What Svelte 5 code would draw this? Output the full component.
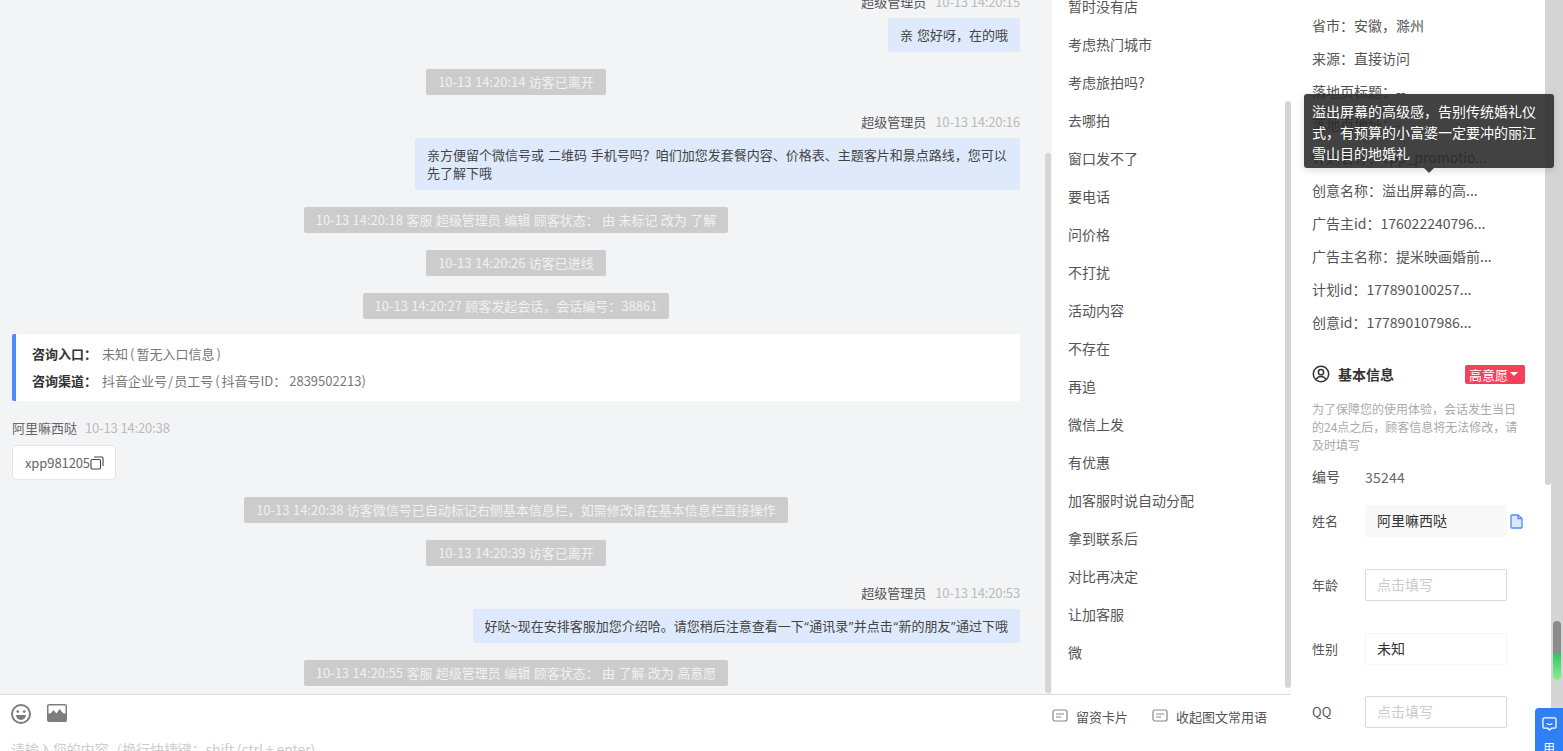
<script>
  const messages = [
    { type: 'head', name: '超级管理员', time: '10-13 14:20:15' },
    { type: 'mine', text: '亲 您好呀，在的哦' },
    { type: 'sys', text: '10-13 14:20:14 访客已离开' },
    { type: 'head', name: '超级管理员', time: '10-13 14:20:16' },
    { type: 'mine', text: '亲方便留个微信号或 二维码 手机号吗？咱们加您发套餐内容、价格表、主题客片和景点路线，您可以先了解下哦' },
    { type: 'sys', text: '10-13 14:20:18 客服 超级管理员 编辑 顾客状态： 由 未标记 改为 了解' },
    { type: 'sys', text: '10-13 14:20:26 访客已进线' },
    { type: 'sys', text: '10-13 14:20:27 顾客发起会话，会话编号：38861' },
    { type: 'entry' },
    { type: 'visitor' },
    { type: 'sys', text: '10-13 14:20:38 访客微信号已自动标记右侧基本信息栏，如需修改请在基本信息栏直接操作' },
    { type: 'sys', text: '10-13 14:20:39 访客已离开' },
    { type: 'head', name: '超级管理员', time: '10-13 14:20:53' },
    { type: 'quoted' },
    { type: 'sys', text: '10-13 14:20:55 客服 超级管理员 编辑 顾客状态： 由 了解 改为 高意愿' }
  ];

  const phrases = ['暂时没有店', '考虑热门城市', '考虑旅拍吗?', '去哪拍', '窗口发不了', '要电话', '问价格', '不打扰', '活动内容', '不存在', '再追', '微信上发', '有优惠', '加客服时说自动分配', '拿到联系后', '对比再决定', '让加客服', '微'];

  const details = ['省市：安徽，滁州', '来源：直接访问', '落地页标题：--', '落地页地址：--', '计划名称：cpp_promotio...', '创意名称：溢出屏幕的高...', '广告主id：176022240796...', '广告主名称：提米映画婚前...', '计划id：177890100257...', '创意id：177890107986...'];
</script>

<div class="app">
  <div class="main">
    <div class="top">
      <div class="chat">
        {#each messages as m}
          {#if m.type === 'head'}
            <div class="head"><span>{m.name}</span><span class="time">{m.time}</span></div>
          {:else if m.type === 'mine'}
            <div class="bubble">{m.text}</div>
          {:else if m.type === 'quoted'}
            <div class="bubble">好哒~现在安排客服加您介绍哈。请您稍后注意查看一下<span class="q">“</span>通讯录<span class="q">”</span>并点击<span class="q">“</span>新的朋友<span class="q">”</span>通过下哦</div>
          {:else if m.type === 'sys'}
            <div class="sys">{m.text}</div>
          {:else if m.type === 'entry'}
            <div class="entry">
              <div><b>咨询入口：</b>未知<span class="w">(</span>暂无入口信息<span class="w">)</span></div>
              <div><b>咨询渠道：</b>抖音企业号<span class="s">/</span>员工号<span class="w">(</span>抖音号ID： 2839502213)</div>
            </div>
          {:else}
            <div class="visitor">
              <div class="visitor-head"><span>阿里嘛西哒</span><span class="time">10-13 14:20:38</span></div>
              <div class="wechat">
                xpp981205
                <svg width="14" height="14" viewBox="0 0 14 14" fill="none" stroke="#444" stroke-width="1.1">
                  <rect x="1" y="3.5" width="9.5" height="9.5" rx="1.2" />
                  <path d="M4 1h7.8A1.2 1.2 0 0 1 13 2.2V10" />
                </svg>
              </div>
            </div>
          {/if}
        {/each}
        <div class="thumb chat-thumb"></div>
      </div>
      <div class="phrases">
        {#each phrases as p}
          <div class="phrase">{p}</div>
        {/each}
        <div class="thumb phrase-thumb"></div>
      </div>
    </div>
    <div class="composer">
      <div class="tools">
        <div class="tools-left">
          <svg width="22" height="22" viewBox="0 0 22 22" fill="none">
            <circle cx="11" cy="11" r="9" stroke="#7d7d7d" stroke-width="2" />
            <circle cx="7.8" cy="8.6" r="1.4" fill="#7d7d7d" />
            <circle cx="14.2" cy="8.6" r="1.4" fill="#7d7d7d" />
            <path d="M6 12h10a5 5 0 0 1-10 0z" fill="#7d7d7d" />
          </svg>
          <svg width="22" height="20" viewBox="0 0 22 20">
            <rect x="1" y="1" width="20" height="18" rx="2" fill="#7d7d7d" />
            <rect x="2.5" y="2.5" width="17" height="8" fill="#fff" />
            <path d="M2.5 13l5-6 3 3.5 3-4.5 6 7v1h-17z" fill="#7d7d7d" />
          </svg>
        </div>
        <div class="tools-right">
          <span class="tool">
            <svg width="16" height="14" viewBox="0 0 16 14" fill="none" stroke="#888" stroke-width="1.2">
              <rect x="1" y="1" width="14" height="11" rx="2" />
              <path d="M4 5h8M4 8h5" />
            </svg>
            留资卡片
          </span>
          <span class="tool">
            <svg width="16" height="14" viewBox="0 0 16 14" fill="none" stroke="#888" stroke-width="1.2">
              <rect x="1" y="1" width="14" height="11" rx="2" />
              <path d="M4 5h8M4 8h5" />
            </svg>
            收起图文常用语
          </span>
        </div>
      </div>
      <div class="placeholder">请输入您的内容（换行快捷键：shift (ctrl + enter)</div>
    </div>
  </div>

  <div class="panel">
    <div class="details">
      {#each details as d}
        <div class="detail">{d}</div>
      {/each}
    </div>
    <div class="info-title">
      <svg width="18" height="18" viewBox="0 0 18 18" fill="none" stroke="#333" stroke-width="1.5">
        <circle cx="9" cy="9" r="7.7" />
        <circle cx="9" cy="7.2" r="2.6" />
        <path d="M4.2 14.6c.8-2.2 2.6-3.2 4.8-3.2s4 1 4.8 3.2" />
      </svg>
      <b>基本信息</b>
      <span class="tag">高意愿<i class="caret"></i></span>
    </div>
    <p class="hint">为了保障您的使用体验，会话发生当日的24点之后，顾客信息将无法修改，请及时填写</p>
    <div class="row id-row"><span class="label">编号</span><span class="id">35244</span></div>
    <div class="row">
      <span class="label">姓名</span>
      <div class="field filled">阿里嘛西哒</div>
      <svg class="doc" width="13" height="15" viewBox="0 0 13 15" fill="none" stroke="#4d8cff" stroke-width="1.3">
        <path d="M1 1.8C1 1.3 1.3 1 1.8 1H8l4 3.6v8.6c0 .5-.3.8-.8.8H1.8c-.5 0-.8-.3-.8-.8z" fill="#dce9ff" />
        <path d="M8 1v3.6h4" />
      </svg>
    </div>
    <div class="row"><span class="label">年龄</span><div class="field empty">点击填写</div></div>
    <div class="row"><span class="label">性别</span><div class="field plain">未知</div></div>
    <div class="row qq-row"><span class="label">QQ</span><div class="field empty">点击填写</div></div>
    <div class="thumb panel-thumb"></div>
  </div>
  <div class="outer-track"></div>

  <div class="tooltip">溢出屏幕的高级感，告别传统婚礼仪式，有预算的小富婆一定要冲的丽江雪山目的地婚礼</div>
  <div class="pill"></div>
  <div class="float-btn">
    <svg width="15" height="14" viewBox="0 0 16 15" fill="none" stroke="#fff" stroke-width="1.4">
      <path d="M2.5 1h11A1.5 1.5 0 0 1 15 2.5v8a1.5 1.5 0 0 1-1.5 1.5H10l-2 2-2-2H2.5A1.5 1.5 0 0 1 1 10.5v-8A1.5 1.5 0 0 1 2.5 1z" />
      <path d="M5 7c1.8 1.3 4.200 1.300 6 0" />
    </svg>
    <span>用</span>
  </div>
</div>

<style>
  :global(body) {
    margin: 0;
  }

  .app {
    position: relative;
    display: flex;
    width: 1563px;
    height: 751px;
    overflow: hidden;
    font-family: "Noto Sans CJK SC", "Noto Sans", sans-serif;
    font-size: 14px;
    color: #555;
    background: #fff;
  }

  .main {
    width: 1291px;
    flex: none;
    display: flex;
    flex-direction: column;
  }

  .top {
    height: 694px;
    flex: none;
    display: flex;
    overflow: hidden;
  }

  .chat {
    position: relative;
    width: 1052px;
    flex: none;
    box-sizing: border-box;
    padding: 0 32px 0 12px;
    background: #f3f4f6;
    display: flex;
    flex-direction: column;
    gap: 17px;
    font-size: 13px;
  }

  .head {
    height: 20px;
    line-height: 20px;
    margin-bottom: -11px;
    display: flex;
    justify-content: flex-end;
    gap: 9px;
  }

  .head:first-child {
    margin-top: -8px;
  }

  .time {
    color: #bbb;
    letter-spacing: -0.15px;
  }

  .bubble {
    align-self: flex-end;
    max-width: 581px;
    padding: 8px 12px;
    line-height: 18px;
    background: #deeafc;
    color: #444;
    border-radius: 2px;
    word-spacing: 1px;
  }

  .q {
    padding: 0 0.5px;
    font-family: "Open Sans", sans-serif;
  }

  .sys {
    align-self: center;
    height: 26px;
    line-height: 26px;
    padding: 0 12px;
    background: #ccc;
    color: #f1f1f1;
    border-radius: 2px;
    white-space: nowrap;
    word-spacing: 0.5px;
  }

  .entry {
    margin-top: -2px;
    padding: 6px 16px 7px;
    line-height: 27px;
    background: #fff;
    border-left: 4px solid #4d8cff;
    border-radius: 2px;
    color: #777;
  }

  .entry b {
    margin-right: 5px;
    color: #333;
    font-weight: 700;
  }

  .w {
    padding: 0 2px;
  }

  .s {
    padding: 0 1px;
  }

  .visitor {
    display: flex;
    flex-direction: column;
    align-items: flex-start;
    gap: 7px;
  }

  .visitor-head {
    height: 20px;
    line-height: 20px;
    display: flex;
    gap: 8px;
    color: #666;
  }

  .wechat {
    height: 35px;
    box-sizing: border-box;
    padding: 0 12px;
    display: flex;
    align-items: center;
    background: #fff;
    border: 1px solid #e4e4e4;
    border-radius: 4px;
    color: #666;
    letter-spacing: -0.1px;
  }

  .wechat svg {
    margin-right: -1px;
  }

  .thumb {
    position: absolute;
    width: 6px;
    background: #d5d5d5;
  }

  .chat-thumb {
    left: 1045px;
    top: 153px;
    bottom: 1px;
    border-radius: 3px;
  }

  .phrases {
    position: relative;
    flex: 1;
    box-sizing: border-box;
    padding-left: 16px;
    margin-top: -13px;
  }

  .phrase {
    height: 38px;
    line-height: 38px;
    color: #555;
  }

  .phrase-thumb {
    right: 0;
    top: 114px;
    height: 587px;
    border-radius: 3px;
  }

  .composer {
    flex: 1;
    border-top: 1px solid #ddd;
    overflow: hidden;
  }

  .tools {
    height: 36px;
    display: flex;
    justify-content: space-between;
    padding: 6px 24px 0 10px;
  }

  .tools-left {
    display: flex;
    gap: 14px;
    align-items: flex-start;
    padding-top: 2px;
  }

  .tools-right {
    display: flex;
    gap: 24px;
    align-items: center;
    padding-top: 4px;
    height: 22px;
    font-size: 13px;
  }

  .tool {
    display: flex;
    align-items: center;
    gap: 8px;
  }

  .placeholder {
    padding: 3px 11px 0;
    font-size: 14px;
    line-height: 18px;
    color: #ccc;
    white-space: nowrap;
    letter-spacing: -0.1px;
  }

  .panel {
    position: relative;
    width: 260px;
    flex: none;
    box-sizing: border-box;
    padding: 9px 26px 0 21px;
    background: #fff;
    overflow: hidden;
  }

  .detail {
    height: 33px;
    line-height: 33px;
    color: #555;
    white-space: nowrap;
  }

  .info-title {
    display: flex;
    align-items: center;
    gap: 8px;
    height: 20px;
    margin-top: 25px;
    color: #333;
  }

  .tag {
    margin-left: auto;
    width: 60px;
    height: 19px;
    line-height: 19px;
    box-sizing: border-box;
    padding-left: 4px;
    font-size: 13px;
    color: #fff;
    background: #f5405a;
    border-radius: 2px;
    display: flex;
    align-items: center;
    gap: 2px;
  }

  .caret {
    width: 0;
    height: 0;
    border: 4px solid transparent;
    border-top-color: #fff;
    border-bottom: 0;
  }

  .hint {
    margin: 16px 0 0;
    font-size: 12px;
    line-height: 18px;
    color: #aaa;
  }

  .row {
    display: flex;
    align-items: center;
    height: 32px;
    margin-top: 32px;
    font-size: 13px;
    white-space: nowrap;
  }

  .id-row {
    height: 20px;
    margin-top: 13px;
    font-size: 14px;
  }

  .id-row + .row {
    margin-top: 18px;
  }

  .qq-row {
    margin-top: 31px;
  }

  .label {
    width: 53px;
    flex: none;
    padding-bottom: 2px;
    color: #555;
  }

  .id {
    color: #666;
    letter-spacing: 0.25px;
  }

  .field {
    width: 142px;
    height: 100%;
    flex: none;
    box-sizing: border-box;
    padding: 0 12px 2px;
    display: flex;
    align-items: center;
    font-size: 14px;
    border-radius: 2px;
    color: #333;
  }

  .filled {
    background: #f8f8f8;
  }

  .empty {
    border: 1px solid #d9d9d9;
    color: #ccc;
    padding: 0 11px 2px;
  }

  .plain {
    border: 1px solid #f6f6f6;
    padding: 0 11px 2px;
  }

  .doc {
    margin-left: 3px;
    flex: none;
  }

  .panel-thumb {
    right: 0;
    top: 0;
    height: 485px;
    border-radius: 0 0 3px 3px;
  }

  .outer-track {
    width: 12px;
    flex: none;
    background: #d5d5d5;
  }

  .tooltip {
    position: absolute;
    left: 1304px;
    top: 94px;
    width: 250px;
    height: 74px;
    box-sizing: border-box;
    padding: 7px 8px;
    line-height: 21px;
    color: #fff;
    background: rgba(40, 40, 40, 0.88);
    border-radius: 3px;
    box-shadow: 0 2px 8px rgba(0, 0, 0, 0.15);
  }

  .tooltip::after {
    content: "";
    position: absolute;
    left: 120px;
    top: 74px;
    border: 5px solid transparent;
    border-top-color: rgba(40, 40, 40, 0.88);
    border-bottom: 0;
  }

  .pill {
    position: absolute;
    left: 1553px;
    top: 621px;
    width: 8px;
    height: 59px;
    border-radius: 4px;
    background: linear-gradient(#8c8c8c 0, #8c8c8c 54%, #35c565 56%, #8cf08c 100%);
  }

  .float-btn {
    position: absolute;
    left: 1535px;
    top: 708px;
    width: 28px;
    height: 43px;
    box-sizing: border-box;
    padding-top: 9px;
    background: #2f80f5;
    border-radius: 4px 0 0 0;
    display: flex;
    flex-direction: column;
    align-items: center;
    gap: 9px;
    overflow: hidden;
    color: #fff;
    font-size: 12px;
    line-height: 16px;
  }

  .float-btn > * {
    flex: none;
  }
</style>
